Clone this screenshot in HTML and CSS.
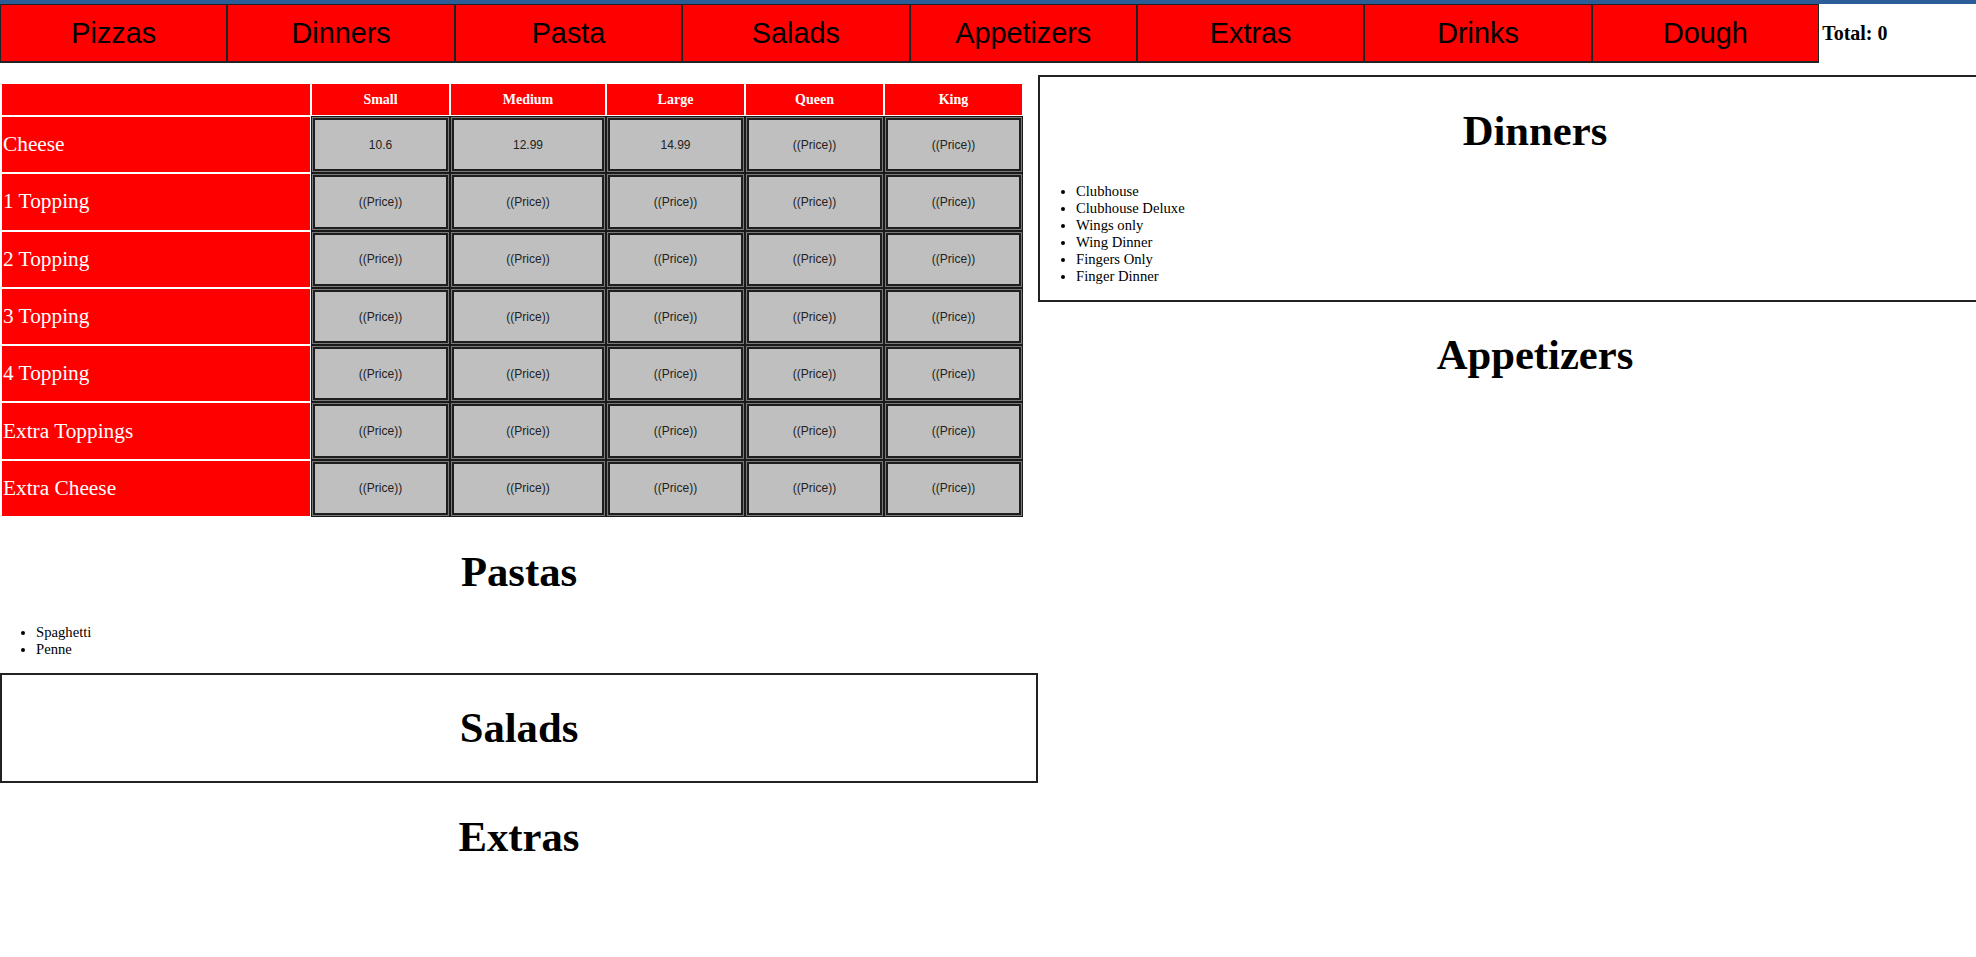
FILE: index.html
```html
<!DOCTYPE html>
<html lang="en">
<head>
    <meta charset="UTF-8">
    <meta name="viewport" content="width=device-width, initial-scale=1.0">
    <title>Pizza Order</title>
    <link rel="stylesheet" href="styles.css">
</head>
<body>
    <div class="topbar"></div>
    <nav class="menu">
        <button class="tab">Pizzas</button>
        <button class="tab">Dinners</button>
        <button class="tab">Pasta</button>
        <button class="tab">Salads</button>
        <button class="tab">Appetizers</button>
        <button class="tab">Extras</button>
        <button class="tab">Drinks</button>
        <button class="tab">Dough</button>
        <span class="total">Total: 0</span>
    </nav>
    <main class="board">
        <div class="left">
            <table class="pizzas">
                <colgroup>
                    <col class="c_name">
                    <col class="c_small">
                    <col class="c_medium">
                    <col class="c_large">
                    <col class="c_queen">
                    <col class="c_king">
                </colgroup>
                <tr class="head">
                    <th></th>
                    <th>Small</th>
                    <th>Medium</th>
                    <th>Large</th>
                    <th>Queen</th>
                    <th>King</th>
                </tr>
                <tr class="row">
                    <td class="label">Cheese</td>
                    <td class="price"><button class="price_btn">10.6</button></td>
                    <td class="price"><button class="price_btn">12.99</button></td>
                    <td class="price"><button class="price_btn">14.99</button></td>
                    <td class="price"><button class="price_btn">((Price))</button></td>
                    <td class="price"><button class="price_btn">((Price))</button></td>
                </tr>
                <tr class="row">
                    <td class="label">1 Topping</td>
                    <td class="price"><button class="price_btn">((Price))</button></td>
                    <td class="price"><button class="price_btn">((Price))</button></td>
                    <td class="price"><button class="price_btn">((Price))</button></td>
                    <td class="price"><button class="price_btn">((Price))</button></td>
                    <td class="price"><button class="price_btn">((Price))</button></td>
                </tr>
                <tr class="row">
                    <td class="label">2 Topping</td>
                    <td class="price"><button class="price_btn">((Price))</button></td>
                    <td class="price"><button class="price_btn">((Price))</button></td>
                    <td class="price"><button class="price_btn">((Price))</button></td>
                    <td class="price"><button class="price_btn">((Price))</button></td>
                    <td class="price"><button class="price_btn">((Price))</button></td>
                </tr>
                <tr class="row">
                    <td class="label">3 Topping</td>
                    <td class="price"><button class="price_btn">((Price))</button></td>
                    <td class="price"><button class="price_btn">((Price))</button></td>
                    <td class="price"><button class="price_btn">((Price))</button></td>
                    <td class="price"><button class="price_btn">((Price))</button></td>
                    <td class="price"><button class="price_btn">((Price))</button></td>
                </tr>
                <tr class="row">
                    <td class="label">4 Topping</td>
                    <td class="price"><button class="price_btn">((Price))</button></td>
                    <td class="price"><button class="price_btn">((Price))</button></td>
                    <td class="price"><button class="price_btn">((Price))</button></td>
                    <td class="price"><button class="price_btn">((Price))</button></td>
                    <td class="price"><button class="price_btn">((Price))</button></td>
                </tr>
                <tr class="row">
                    <td class="label">Extra Toppings</td>
                    <td class="price"><button class="price_btn">((Price))</button></td>
                    <td class="price"><button class="price_btn">((Price))</button></td>
                    <td class="price"><button class="price_btn">((Price))</button></td>
                    <td class="price"><button class="price_btn">((Price))</button></td>
                    <td class="price"><button class="price_btn">((Price))</button></td>
                </tr>
                <tr class="row">
                    <td class="label">Extra Cheese</td>
                    <td class="price"><button class="price_btn">((Price))</button></td>
                    <td class="price"><button class="price_btn">((Price))</button></td>
                    <td class="price"><button class="price_btn">((Price))</button></td>
                    <td class="price"><button class="price_btn">((Price))</button></td>
                    <td class="price"><button class="price_btn">((Price))</button></td>
                </tr>
            </table>
            <section class="group">
                <h1>Pastas</h1>
                <ul>
                    <li>Spaghetti</li>
                    <li>Penne</li>
                </ul>
            </section>
            <section class="group boxed">
                <h1>Salads</h1>
            </section>
            <section class="group">
                <h1>Extras</h1>
            </section>
        </div>
        <div class="right">
            <section class="group boxed">
                <h1>Dinners</h1>
                <ul>
                    <li>Clubhouse</li>
                    <li>Clubhouse Deluxe</li>
                    <li>Wings only</li>
                    <li>Wing Dinner</li>
                    <li>Fingers Only</li>
                    <li>Finger Dinner</li>
                </ul>
            </section>
            <section class="group">
                <h1>Appetizers</h1>
            </section>
        </div>
    </main>
</body>
</html>
```

FILE: styles.css
```css
html, body {
    overflow-x: hidden;
}
body {
    margin: 0;
    background-color: white;
    font-family: "Liberation Serif", "Times New Roman", serif;
    font-size: 16px;
}
.topbar {
    height: 4px;
    background-color: #2d5d99;
}
.menu {
    display: flex;
    align-items: center;
    height: 59px;
}
.tab {
    flex: none;
    width: 227.4px;
    height: 59px;
    padding: 0;
    background-color: red;
    color: black;
    border: 1px solid #222;
    border-bottom-width: 2px;
    font-family: "Liberation Sans", Arial, sans-serif;
    font-size: 28.8px;
}
.total {
    margin-left: 3px;
    font-weight: bold;
    font-size: 20px;
}
.board {
    display: flex;
    align-items: flex-start;
}
.left {
    flex: none;
    width: 1038px;
}
.right {
    flex: none;
    width: 994px;
    margin-top: 12px;
}
.pizzas {
    margin-top: 19px;
    width: 1024px;
    table-layout: fixed;
    border-spacing: 2px;
}
.c_name { width: 308px; }
.c_small { width: 137px; }
.c_medium { width: 154px; }
.c_large { width: 137px; }
.c_queen { width: 137px; }
.c_king { width: 137px; }
.head th {
    height: 31px;
    padding: 0;
    background-color: red;
    color: white;
    font-size: 14px;
    font-weight: bold;
}
.row {
    height: 55.3px;
}
.label {
    padding: 0 1px;
    background-color: red;
    color: white;
    font-size: 21.33px;
    vertical-align: middle;
}
.price {
    padding: 0;
    background-color: #1a1a1a;
    box-shadow: 0 0 0 1px #1a1a1a;
}
.price_btn {
    display: block;
    width: 100%;
    height: 55.3px;
    margin: 0;
    padding: 0;
    background-color: #bfbfbf;
    color: #222;
    border: 1px solid #7a7a7a;
    box-shadow: inset 0 0 0 2px #1e1e1e;
    font-family: "Liberation Sans", Arial, sans-serif;
    font-size: 12px;
}
.group h1 {
    margin: 0.67em 0;
    font-size: 42.67px;
    text-align: center;
}
.group ul {
    margin: 14.67px 0;
    padding-left: 36px;
    font-size: 14.67px;
}
.boxed {
    border: 2px solid #222;
}
```
